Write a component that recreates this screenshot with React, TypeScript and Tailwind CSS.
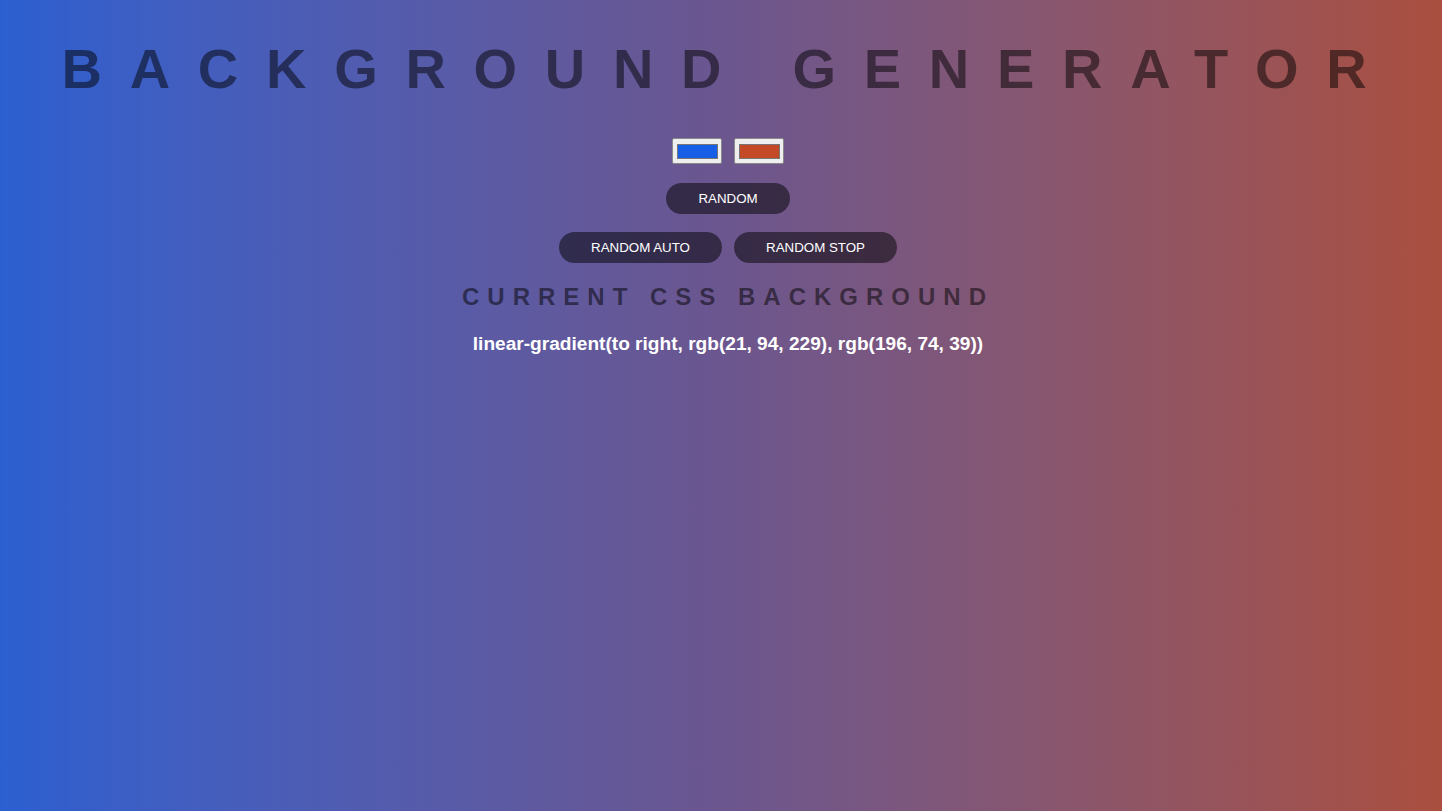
import { useState } from 'react'

type Rgb = [number, number, number]

const toCss = (c: Rgb) => `rgb(${c[0]}, ${c[1]}, ${c[2]})`

function Swatch({ color }: { color: Rgb }) {
  return (
    <div className="w-[50px] h-[26px] border border-[#8a8a8a] rounded-[2px] bg-[#efefef] flex items-center justify-center">
      <div className="w-[41px] h-[15px] border border-[#777777]" style={{ backgroundColor: toCss(color) }} />
    </div>
  )
}

function PillButton({ label, onClick }: { label: string; onClick?: () => void }) {
  return (
    <button
      type="button"
      onClick={onClick}
      className="h-[31px] px-[32px] rounded-full bg-black/50 text-white text-[13.33px] leading-none font-['Liberation_Sans',Arial,sans-serif] cursor-pointer"
    >
      {label}
    </button>
  )
}

export default function App() {
  const [left] = useState<Rgb>([21, 94, 229])
  const [right] = useState<Rgb>([196, 74, 39])

  return (
    <div className="min-h-screen w-full pl-[14px] bg-linear-to-r from-[#2b5fd0] via-[#6b568f] to-[#aa4f3f] font-['Liberation_Sans',Arial,sans-serif] flex flex-col items-center">
      <h1 className="mt-[41px] text-[56px] leading-none font-bold tracking-[27.7px] text-black/50 whitespace-nowrap">
        BACKGROUND GENERATOR
      </h1>

      <div className="mt-[41px] flex gap-3">
        <Swatch color={left} />
        <Swatch color={right} />
      </div>

      <div className="mt-[19px]">
        <PillButton label="RANDOM" />
      </div>

      <div className="mt-[18px] flex gap-3">
        <PillButton label="RANDOM AUTO" />
        <PillButton label="RANDOM STOP" />
      </div>

      <h2 className="mt-[22px] text-[24px] leading-none font-bold tracking-[8px] text-black/50">
        CURRENT CSS BACKGROUND
      </h2>

      <h3 className="mt-[25px] text-[19.1px] leading-none font-bold text-white">
        linear-gradient(to right, {toCss(left)}, {toCss(right)})
      </h3>
    </div>
  )
}
